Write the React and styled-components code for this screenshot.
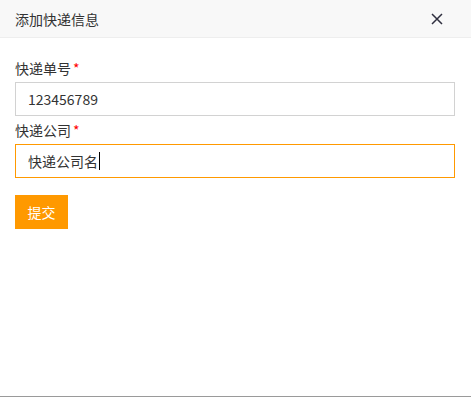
import React from "react";
import styled, { createGlobalStyle } from "styled-components";

const GlobalStyle = createGlobalStyle`
  html, body {
    margin: 0;
    padding: 0;
    background: #fff;
  }
  body {
    font-family: "Noto Sans CJK SC", "Noto Sans", sans-serif;
    font-size: 14px;
    color: #333;
  }
`;

const Dialog = styled.div`
  height: 100vh;
  box-sizing: border-box;
  border-bottom: 1px solid #9a9a9a;
  display: flex;
  flex-direction: column;
`;

const Header = styled.div`
  height: 37px;
  display: flex;
  align-items: center;
  justify-content: space-between;
  padding: 0 15px;
  background: #f8f8f8;
  border-bottom: 1px solid #eee;
`;

const Title = styled.div`
  font-size: 14px;
  color: #333;
  line-height: 20px;
`;

const Close = styled.button`
  border: 0;
  background: none;
  padding: 0;
  margin-right: 12px;
  width: 14px;
  height: 14px;
  display: flex;
  align-items: center;
  justify-content: center;
  cursor: pointer;
`;

const Form = styled.form`
  padding: 20px 16px 0 15px;
  display: flex;
  flex-direction: column;
`;

const Label = styled.label`
  line-height: 20px;
  margin-bottom: 4px;
  color: #333;
`;

const Star = styled.span`
  color: #f00;
  margin-left: 2px;
`;

const Field = styled.div`
  height: 34px;
  box-sizing: border-box;
  border: 1px solid ${(p) => (p.$focused ? "#ff9900" : "#d2d2d2")};
  padding: 0 12px;
  display: flex;
  align-items: center;
  color: #333;
  margin-bottom: 4px;
`;

const Caret = styled.span`
  display: inline-block;
  width: 1px;
  height: 18px;
  background: #000;
  margin-left: 1px;
`;

const Submit = styled.button`
  margin-top: 13px;
  align-self: flex-start;
  width: 53px;
  height: 34px;
  padding: 0;
  border: 0;
  background: #ff9900;
  color: #fff;
  font-family: inherit;
  font-size: 14px;
  cursor: pointer;
`;

export default function App() {
  return (
    <Dialog>
      <GlobalStyle />
      <Header>
        <Title>添加快递信息</Title>
        <Close aria-label="关闭">
          <svg width="12" height="12" viewBox="0 0 12 12">
            <path d="M1 1L11 11M11 1L1 11" stroke="#2f2f3f" strokeWidth="1.5" />
          </svg>
        </Close>
      </Header>
      <Form onSubmit={(e) => e.preventDefault()}>
        <Label>
          快递单号<Star>*</Star>
        </Label>
        <Field>123456789</Field>
        <Label>
          快递公司<Star>*</Star>
        </Label>
        <Field $focused>
          快递公司名
          <Caret />
        </Field>
        <Submit type="submit">提交</Submit>
      </Form>
    </Dialog>
  );
}
